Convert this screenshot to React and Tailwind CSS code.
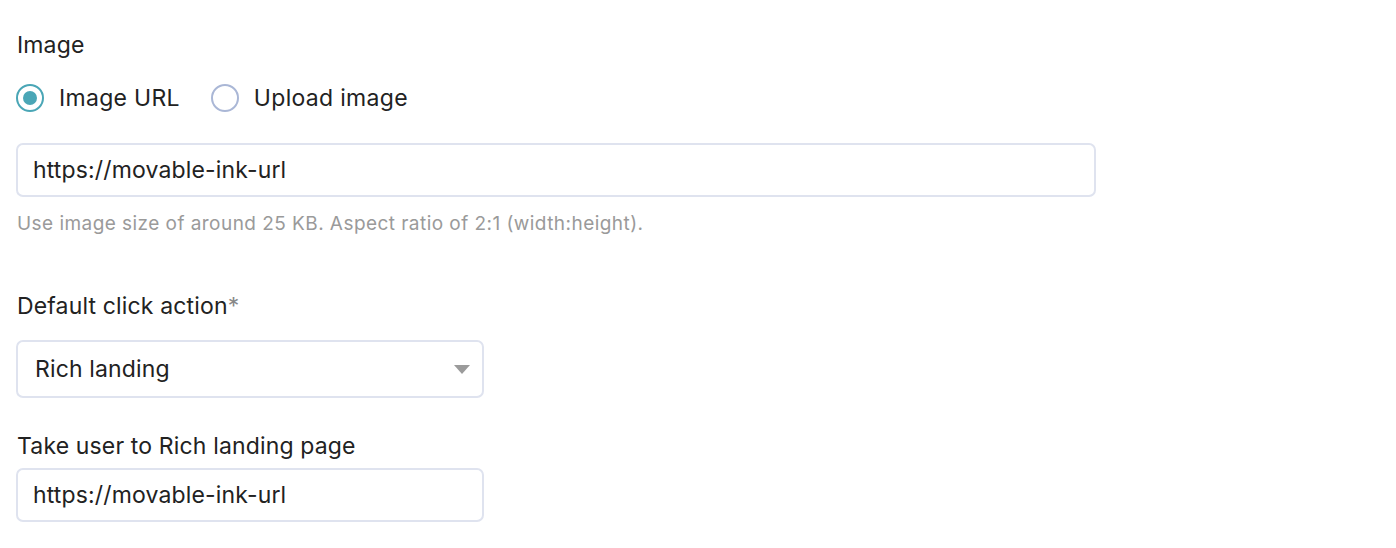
import { useState } from 'react';

const Radio = ({ checked, label, onClick }) => (
  <label className="flex items-center cursor-pointer" onClick={onClick}>
    <span
      className={
        checked
          ? 'w-[28px] h-[28px] rounded-full border-2 border-[#4aa6b6] flex items-center justify-center'
          : 'w-[28px] h-[28px] rounded-full border-2 border-[#aab7d6] flex items-center justify-center'
      }
    >
      {checked && <span className="w-[14px] h-[14px] rounded-full bg-[#4aa6b6]"></span>}
    </span>
    <span className="ml-[15px] text-[23px] leading-[28px] tracking-[0.3px] text-[#222]">{label}</span>
  </label>
);

export default function App() {
  const [source, setSource] = useState('url');

  return (
    <div className="w-[1396px] h-[548px] bg-white px-4 pt-[31px] font-['Inter',sans-serif] text-[#222] tracking-[0.15px]">
      {/* Image source */}
      <div className="pl-[1px] text-[23px] leading-[28px]">Image</div>
      <div className="flex items-center gap-[31px] mt-[25px]">
        <Radio checked={source === 'url'} label="Image URL" onClick={() => setSource('url')} />
        <Radio checked={source === 'upload'} label="Upload image" onClick={() => setSource('upload')} />
      </div>

      <input
        className="block mt-[31px] w-[1080px] h-[54px] px-[15px] border-2 border-[#dfe3ef] rounded-[7px] text-[23px] tracking-[0.15px] text-[#222] outline-none"
        defaultValue="https://movable-ink-url"
      />
      <p className="mt-[15px] pl-[1px] text-[19px] leading-[24px] tracking-[0.45px] text-[#9a9a9a]">
        Use image size of around 25 KB. Aspect ratio of 2:1 (width:height).
      </p>

      {/* Click action */}
      <div className="mt-[56px] pl-[1px] text-[23px] leading-[28px]">
        Default click action<span className="text-[#888]">*</span>
      </div>
      <div className="mt-[20px] w-[468px] h-[58px] border-2 border-[#dfe3ef] rounded-[7px] flex items-center justify-between pl-[17px] pr-[12px]">
        <span className="text-[23px]">Rich landing</span>
        <svg width="16" height="9" viewBox="0 0 16 9">
          <path d="M0 0 L16 0 L8 9 Z" fill="#9b9b9b" />
        </svg>
      </div>

      <div className="mt-[34px] pl-[1px] text-[23px] leading-[28px]">Take user to Rich landing page</div>
      <input
        className="block mt-[8px] w-[468px] h-[54px] px-[15px] border-2 border-[#dfe3ef] rounded-[7px] text-[23px] tracking-[0.15px] text-[#222] outline-none"
        defaultValue="https://movable-ink-url"
      />
    </div>
  );
}
